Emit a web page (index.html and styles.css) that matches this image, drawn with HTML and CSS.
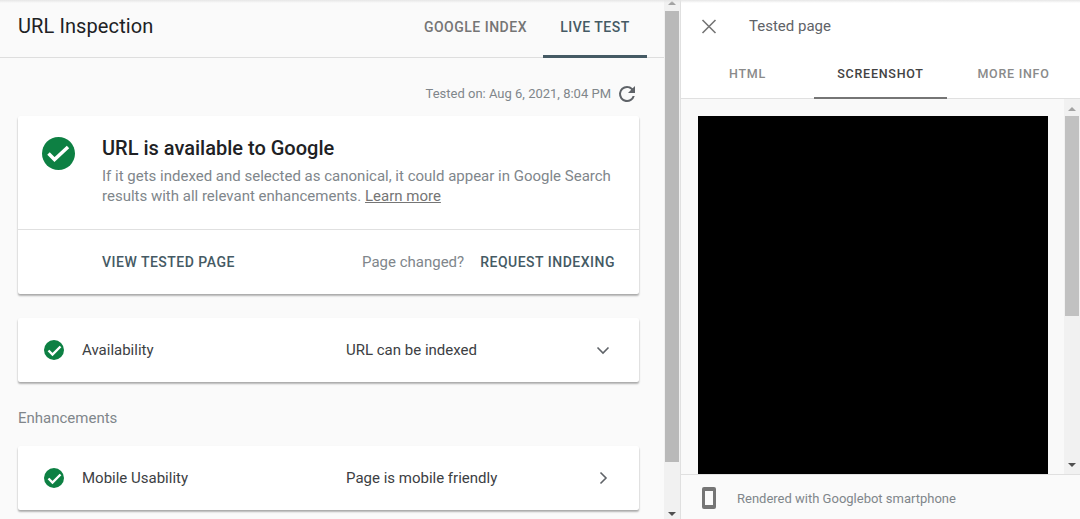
FILE: index.html
```html
<!DOCTYPE html>
<html lang="en">
<head>
<meta charset="utf-8">
<title>URL Inspection</title>
<link rel="stylesheet" href="styles.css">
</head>
<body>
<div class="app">
  <main class="left">
    <div class="left-main">
      <header class="left-head">
        <h1 class="title">URL Inspection</h1>
        <nav class="tabs">
          <div class="tab">GOOGLE INDEX</div>
          <div class="tab tab-active">LIVE TEST</div>
        </nav>
      </header>
      <div class="content">
        <div class="tested">
          <span>Tested on: Aug 6, 2021, 8:04 PM</span>
          <svg class="refresh" viewBox="0 0 24 24" width="24" height="24"><path fill="#5f6368" d="M17.65 6.35A7.96 7.96 0 0 0 12 4a8 8 0 1 0 7.73 10h-2.08A6 6 0 1 1 12 6c1.66 0 3.14.69 4.22 1.78L13 11h7V4l-2.35 2.35z"/></svg>
        </div>
        <section class="card hero">
          <div class="hero-top">
            <svg class="check-lg" viewBox="0 0 33 33" width="33" height="33"><circle cx="16.5" cy="16.5" r="16.5" fill="#0d8043"/><path d="M6.5 16.5l6 6L26 10" fill="none" stroke="#fff" stroke-width="3.5"/></svg>
            <div class="hero-text">
              <h2 class="hero-title">URL is available to Google</h2>
              <p class="hero-desc">If it gets indexed and selected as canonical, it could appear in Google Search results with all relevant enhancements. <a class="learn">Learn more</a></p>
            </div>
          </div>
          <div class="hero-actions">
            <span class="action">VIEW TESTED PAGE</span>
            <span class="changed">Page changed?</span>
            <span class="action">REQUEST INDEXING</span>
          </div>
        </section>
        <section class="card row">
          <svg class="check-sm" viewBox="0 0 20 20" width="20" height="20"><circle cx="10" cy="10" r="10" fill="#0d8043"/><path d="M4.5 10.5l4 4 8-8" fill="none" stroke="#fff" stroke-width="2.4"/></svg>
          <span class="row-name">Availability</span>
          <span class="row-value">URL can be indexed</span>
          <svg class="chev" viewBox="0 0 24 24" width="24" height="24"><path d="M6.5 9.5L12 15l5.5-5.5" fill="none" stroke="#5f6368" stroke-width="1.6"/></svg>
        </section>
        <div class="section-label">Enhancements</div>
        <section class="card row">
          <svg class="check-sm" viewBox="0 0 20 20" width="20" height="20"><circle cx="10" cy="10" r="10" fill="#0d8043"/><path d="M4.5 10.5l4 4 8-8" fill="none" stroke="#fff" stroke-width="2.4"/></svg>
          <span class="row-name">Mobile Usability</span>
          <span class="row-value">Page is mobile friendly</span>
          <svg class="chev" viewBox="0 0 24 24" width="24" height="24"><path d="M9.5 6.5L15 12l-5.5 5.5" fill="none" stroke="#5f6368" stroke-width="1.6"/></svg>
        </section>
      </div>
    </div>
    <div class="scrollbar scrollbar-left">
      <div class="arrow arrow-up arrow-left-up"></div>
      <div class="thumb thumb-left"></div>
      <div class="arrow arrow-down arrow-left-down"></div>
    </div>
  </main>
  <aside class="right">
    <header class="right-head">
      <svg class="close" viewBox="0 0 16 16" width="16" height="16"><path d="M1.5 2l13 13M14.5 2l-13 13" stroke="#757575" stroke-width="1.6" fill="none"/></svg>
      <span class="right-title">Tested page</span>
    </header>
    <nav class="right-tabs">
      <div class="rtab">HTML</div>
      <div class="rtab rtab-active">SCREENSHOT</div>
      <div class="rtab">MORE INFO</div>
    </nav>
    <div class="right-body">
      <div class="shot-wrap"><div class="shot"></div></div>
      <div class="scrollbar scrollbar-right">
        <div class="arrow arrow-up arrow-right-up"></div>
        <div class="thumb thumb-right"></div>
        <div class="arrow arrow-down arrow-right-down"></div>
      </div>
    </div>
    <footer class="right-foot">
      <svg class="phone" viewBox="0 0 16 22" width="16" height="22"><path fill="#757575" fill-rule="evenodd" d="M3 0h10a2 2 0 0 1 2 2v18a2 2 0 0 1-2 2H3a2 2 0 0 1-2-2V2a2 2 0 0 1 2-2zm1 4v14h8V4H4z"/></svg>
      <span class="foot-text">Rendered with Googlebot smartphone</span>
    </footer>
  </aside>
</div>
</body>
</html>
```
FILE: styles.css
```css
* { box-sizing: border-box; }
html, body { margin: 0; height: 100%; overflow: hidden; }
body { font-family: Roboto, "Noto Sans", sans-serif; color: #212121; background: #fff; }
.app { display: flex; width: 1080px; height: 519px; position: relative; }
.app::after { content: ""; position: absolute; left: 0; right: 0; top: 0; height: 3px; background: linear-gradient(#e6e6e6, rgba(240,240,240,0)); pointer-events: none; }

.left { display: flex; width: 680px; height: 519px; background: #fafafa; }
.left-main { width: 664px; display: flex; flex-direction: column; }
.left-head { height: 58px; flex: none; display: flex; align-items: stretch; justify-content: space-between; border-bottom: 1px solid #dedede; padding: 0 17px 0 18px; }
.title { margin: 0; padding-top: 13px; font-size: 20px; line-height: 26px; font-weight: 400; color: #202124; letter-spacing: 0.1px; }
.tabs { display: flex; }
.tab { padding-top: 19px; height: 58px; text-align: center; font-size: 14px; line-height: 16px; font-weight: 500; letter-spacing: 0.5px; color: #757575; }
.tab:first-child { padding-right: 16px; }
.tab-active { width: 104px; color: #455a64; border-bottom: 3px solid #455a64; }

.content { padding: 0 25px 0 18px; }
.tested { height: 58px; display: flex; align-items: flex-start; justify-content: flex-end; padding: 26px 0 0; font-size: 13px; line-height: 20px; color: #80868b; }
.refresh { margin: -2px 0 0 4px; flex: none; }

.card { background: #fff; border-radius: 2px; box-shadow: 0 1px 2px rgba(0,0,0,.12), 0 2px 2px rgba(0,0,0,.25); }
.hero { height: 178px; display: flex; flex-direction: column; }
.hero-top { height: 114px; border-bottom: 1px solid #e0e0e0; display: flex; padding: 21px 24px 0 24px; }
.check-lg { flex: none; margin-right: 27px; }
.hero-text { margin-top: -1px; }
.hero-title { margin: 0; font-size: 20px; line-height: 24px; font-weight: 500; color: #202124; }
.hero-desc { margin: 6px 0 0; font-size: 15px; line-height: 20px; color: #80868b; }
.learn { text-decoration: underline; color: #757575; }
.hero-actions { height: 64px; display: flex; align-items: center; padding: 0 24px 1px 84px; }
.action { font-size: 14px; font-weight: 500; letter-spacing: 0.5px; color: #455a64; }
.changed { margin-left: auto; margin-right: 16px; font-size: 15px; color: #80868b; }

.row { margin-top: 24px; height: 64px; display: flex; align-items: center; padding: 0 24px 0 26px; font-size: 15px; color: #3c4043; }
.check-sm { flex: none; margin-right: 18px; }
.row-name { width: 264px; }
.row-value { flex: 1; }
.chev { flex: none; }
.section-label { margin-top: 26px; height: 20px; font-size: 15px; line-height: 20px; color: #80868b; }
.section-label + .row { margin-top: 18px; }

.scrollbar { width: 16px; flex: none; display: flex; flex-direction: column; align-items: center; background: #f1f1f1; }
.scrollbar-left { height: 519px; }
.arrow { flex: none; width: 0; height: 0; border-left: 4px solid transparent; border-right: 4px solid transparent; }
.arrow-up { border-bottom: 4px solid #a3a3a3; }
.arrow-down { margin-top: auto; border-top: 4px solid #505050; }
.arrow-left-up { margin: 1px 0 6px; }
.arrow-left-down { margin-bottom: 3px; }
.arrow-right-up { margin: 8px 0 5px; }
.arrow-right-down { margin-bottom: 7px; }
.thumb { width: 14px; background: #b9b9b9; }
.thumb-left { height: 451px; }
.thumb-right { height: 200px; background: #c1c1c1; }

.right { width: 400px; height: 519px; display: flex; flex-direction: column; border-left: 1px solid #e0e0e0; background: #fff; }
.right-head { height: 52px; flex: none; display: flex; align-items: center; padding: 0 0 0 20px; }
.right-title { margin-left: 32px; font-size: 15px; color: #5f6368; }
.right-tabs { height: 47px; flex: none; display: flex; border-bottom: 1px solid #e0e0e0; }
.rtab { width: 133px; padding-top: 14px; text-align: center; font-size: 12.5px; line-height: 16px; font-weight: 500; letter-spacing: 0.75px; color: #8a8a8a; }
.rtab-active { color: #424242; border-bottom: 2px solid #757575; height: 47px; }
.right-body { height: 375px; flex: none; display: flex; background: #f9f9f9; }
.shot-wrap { flex: 1; padding: 17px 0 0 17px; }
.shot { width: 350px; height: 358px; background: #000; }
.scrollbar-right { height: 375px; }
.right-foot { flex: 1; display: flex; align-items: center; border-top: 1px solid #e0e0e0; background: #fafafa; padding: 2px 0 0 20px; }
.foot-text { margin-left: 20px; font-size: 13px; color: #80868b; }
.phone { flex: none; }
```
